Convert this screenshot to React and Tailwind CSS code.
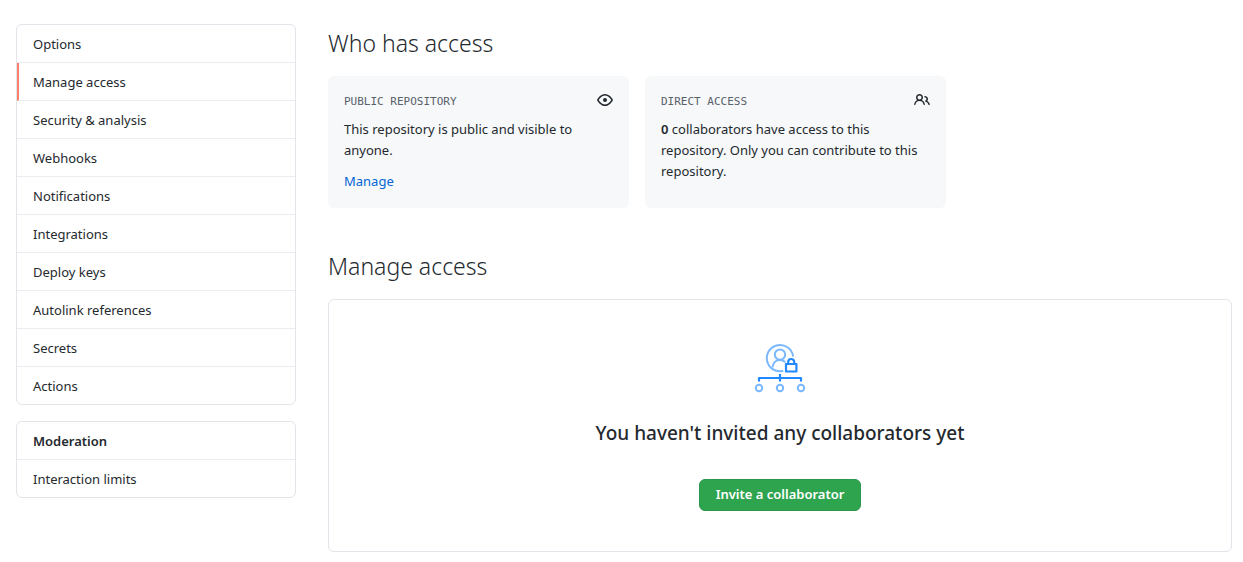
const settingsLinks = [
  "Options",
  "Manage access",
  "Security & analysis",
  "Webhooks",
  "Notifications",
  "Integrations",
  "Deploy keys",
  "Autolink references",
  "Secrets",
  "Actions",
];

function EyeIcon() {
  return (
    <svg className="size-4 shrink-0" viewBox="0 0 16 16" fill="currentColor" aria-hidden="true">
      <path
        fillRule="evenodd"
        d="M1.679 7.932c.412-.621 1.242-1.75 2.366-2.717C5.175 4.242 6.527 3.5 8 3.5c1.473 0 2.824.742 3.955 1.715 1.124.967 1.954 2.096 2.366 2.717a.119.119 0 010 .136c-.412.621-1.242 1.75-2.366 2.717C10.825 11.758 9.473 12.5 8 12.5c-1.473 0-2.824-.742-3.955-1.715C2.92 9.818 2.09 8.69 1.679 8.068a.119.119 0 010-.136zM8 2c-1.981 0-3.67.992-4.933 2.078C1.797 5.169.88 6.423.43 7.1a1.619 1.619 0 000 1.798c.45.678 1.367 1.932 2.637 3.024C4.329 13.008 6.019 14 8 14c1.981 0 3.67-.992 4.933-2.078 1.27-1.091 2.187-2.345 2.637-3.023a1.619 1.619 0 000-1.798c-.45-.678-1.367-1.932-2.637-3.023C11.671 2.992 9.981 2 8 2zm0 8a2 2 0 100-4 2 2 0 000 4z"
      />
    </svg>
  );
}

function PeopleIcon() {
  return (
    <svg className="size-4 shrink-0" viewBox="0 0 16 16" fill="currentColor" aria-hidden="true">
      <path
        fillRule="evenodd"
        d="M5.5 3.5a2 2 0 100 4 2 2 0 000-4zM2 5.5a3.5 3.5 0 115.898 2.549 5.507 5.507 0 013.034 4.084.75.75 0 11-1.482.235 4.001 4.001 0 00-7.9 0 .75.75 0 01-1.482-.236A5.507 5.507 0 013.102 8.05 3.49 3.49 0 012 5.5zM11 4a.75.75 0 100 1.5 1.5 1.5 0 01.666 2.844.75.75 0 00-.416.672v.352a.75.75 0 00.574.73c1.2.289 2.162 1.2 2.522 2.372a.75.75 0 101.434-.44 5.01 5.01 0 00-2.56-3.012A3 3 0 0011 4z"
      />
    </svg>
  );
}

function AccessIcon() {
  return (
    <svg className="size-14" viewBox="0 0 56 56" fill="none" strokeWidth="2" aria-hidden="true">
      <g stroke="#79b8ff" strokeLinecap="round">
        <path d="M30.5 31.1A13.2 13.2 0 1 1 41 15.8" />
        <circle cx="28" cy="14.6" r="5.2" />
        <path d="M20.6 26.6C21.2 22.6 24.2 20 28 20c1.9 0 3.5.6 4.8 1.8" />
        <circle cx="7" cy="48" r="3.2" />
        <circle cx="28" cy="48" r="3.2" />
        <circle cx="49" cy="48" r="3.2" />
      </g>
      <g stroke="#2188ff" strokeWidth="2.2" strokeLinejoin="round">
        <rect x="34" y="24" width="10.4" height="7.5" />
        <path d="M36.2 24v-2a3 3 0 0 1 6 0v2" />
        <path d="M7 41.5V38h42v3.5M28 34v7.5" />
      </g>
    </svg>
  );
}

function NavLink({ label, active }) {
  return (
    <a
      href="#"
      aria-current={active ? "page" : undefined}
      className={
        active
          ? "block border-l-2 border-l-[#f9826c] pt-[9px] pr-4 pb-[7px] pl-3.5 leading-[21px]"
          : "block px-4 pt-[9px] pb-[7px] leading-[21px]"
      }
    >
      {label}
    </a>
  );
}

function AccessCard({ title, icon, children }) {
  return (
    <section className="rounded-md bg-[#f6f8fa] p-4">
      <div className="flex items-start justify-between">
        <h3 className="font-['DejaVu_Sans_Mono',monospace] text-[11px] leading-5 text-[#586069] uppercase">
          {title}
        </h3>
        {icon}
      </div>
      <div className="mt-[7px] leading-[21px]">{children}</div>
    </section>
  );
}

export default function App() {
  return (
    <div className="flex gap-8 bg-white pt-6 pr-[11px] pb-2.5 pl-4 font-['Noto_Sans','Open_Sans',sans-serif] text-[13px] text-[#24292e]">
      <aside className="flex w-[280px] shrink-0 flex-col gap-4">
        <nav
          aria-label="Settings"
          className="divide-y divide-[#eaecef] overflow-hidden rounded-md border border-[#e1e4e8]"
        >
          {settingsLinks.map((label) => (
            <NavLink key={label} label={label} active={label === "Manage access"} />
          ))}
        </nav>
        <nav
          aria-label="Moderation"
          className="divide-y divide-[#eaecef] overflow-hidden rounded-md border border-[#e1e4e8]"
        >
          <h2 className="px-4 pt-[9px] pb-[7px] leading-[21px] font-semibold">Moderation</h2>
          <NavLink label="Interaction limits" />
        </nav>
      </aside>

      <main className="min-w-0 flex-1">
        <h2 className="text-[23px] leading-[38px] font-[350]">Who has access</h2>
        <div className="mt-3.5 grid w-[618px] max-w-full grid-cols-2 gap-4">
          <AccessCard title="Public repository" icon={<EyeIcon />}>
            <p>This repository is public and visible to anyone.</p>
            <a href="#" className="mt-2.5 block w-fit text-[#0366d6]">
              Manage
            </a>
          </AccessCard>
          <AccessCard title="Direct access" icon={<PeopleIcon />}>
            <p>
              <strong className="font-semibold">0</strong> collaborators have access to this
              repository. Only you can contribute to this repository.
            </p>
          </AccessCard>
        </div>

        <h2 className="mt-[39px] text-[23px] leading-[38px] font-[350]">Manage access</h2>
        <section className="mt-3.5 flex flex-col items-center rounded-md border border-[#e1e4e8] p-10">
          <AccessIcon />
          <h3 className="mt-[22px] text-[19px] leading-[30px] font-medium">
            You haven't invited any collaborators yet
          </h3>
          <button
            type="button"
            className="mt-[31px] h-8 rounded-md border border-[#2c974b] bg-[#2ea44f] px-4 font-semibold text-white"
          >
            Invite a collaborator
          </button>
        </section>
      </main>
    </div>
  );
}
